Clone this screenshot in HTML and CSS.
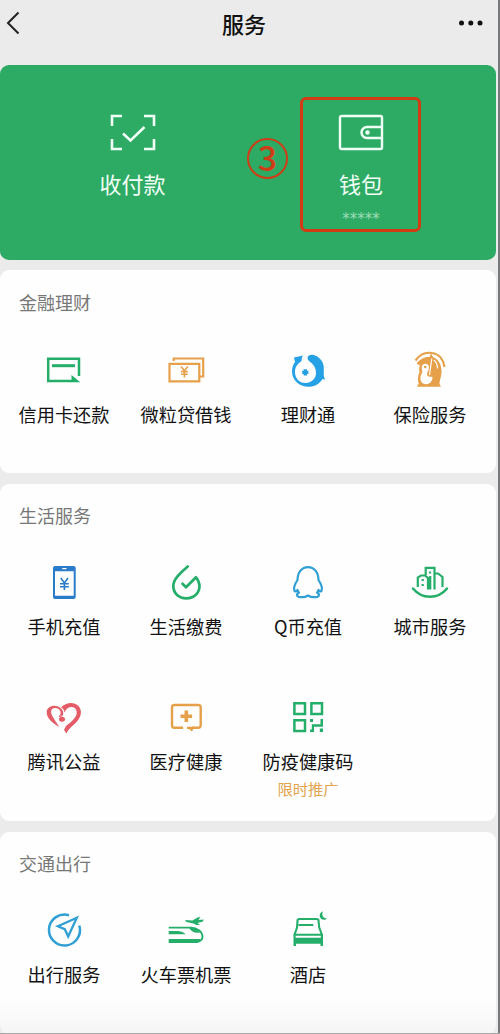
FILE: index.html
```html
<!DOCTYPE html>
<html lang="zh-CN">
<head>
<meta charset="utf-8">
<title>服务</title>
<link rel="stylesheet" href="styles.css">
</head>
<body>
<div class="screen">
  <header class="topbar">
    <svg class="back" width="14" height="24" viewBox="0 0 14 24"><path d="M12.500 1.500L2 12L12.500 22.500"/></svg>
    <h1 class="page-title">服务</h1>
    <svg class="more" width="24" height="6" viewBox="0 0 24 6"><circle cx="2.500" cy="3" r="2.500"/><circle cx="11.800" cy="3" r="2.500"/><circle cx="21" cy="3" r="2.500"/></svg>
  </header>

  <section class="hero">
    <div class="hero-item pay">
      <svg width="46" height="38" viewBox="0 0 46 38"><path d="M2 12V2H12M34 2H44V12M44 25V35H34M12 35H2V25" stroke-width="2.600"/><path d="M13 19.500L20.500 26.500L34.500 13" stroke-width="2.600"/></svg>
      <span class="hero-label">收付款</span>
    </div>
    <div class="hero-item wallet">
      <svg width="46" height="38" viewBox="0 0 46 38"><rect x="2" y="2" width="42" height="33" rx="1.500" stroke-width="2.400"/><path d="M43.500 13H29a5.500 5.500 0 0 0 0 11H43.500" stroke-width="2.400"/><circle cx="29.500" cy="18.500" r="2.200" class="dot"/></svg>
      <span class="hero-label">钱包</span>
      <span class="hero-sub">*****</span>
    </div>
    <div class="mark-box"></div>
    <div class="mark-num">3</div>
  </section>

  <section class="card finance">
    <h2 class="card-title">金融理财</h2>
    <div class="grid">
      <div class="item"><svg class="icon green" viewBox="0 0 44 44"><path d="M37 28V10.800H6.200V33H30" stroke-width="2.500"/><path d="M10 17.700H33" stroke-width="3"/><path class="fill" d="M29.500 27L38.300 34.300H29.500Z"/></svg><span>信用卡还款</span></div>
      <div class="item"><svg class="icon orange" viewBox="0 0 44 44"><path d="M5.500 15.800H35.300V33.300H5.500ZM9.700 13V10.500H39.200V28.500H36" stroke-width="2.200"/><path d="M17 18.500L20.400 22.800L23.800 18.500M20.400 22.800V29.500M17 23.600H23.800M17 26.300H23.800" stroke-width="1.600"/></svg><span>微粒贷借钱</span></div>
      <div class="item"><svg class="icon sky" viewBox="0 0 44 44"><path class="fill" d="M8 9.500L17 7.500C15.500 9.500 16 11.500 15.300 13.500C11.500 15.500 9 19 9 24C9 30.500 13.500 35 19.300 35C25.500 35 30 30.500 30 25C30 20.500 28 17.500 26 15.500C23.500 13.500 21.500 12 21.500 10C21.500 7.500 24 6.500 27 6.700C32.500 8 37 13 37.700 18C38 22 37.600 25.500 37.800 28L39 31.500L36.500 31C33.500 36 28.500 38.800 22.500 38.800C13 38.800 6 32 6 23.500C6 19.500 7 16.500 9 14Z"/><path d="M19.300 21.300V27.500M16.200 24.400H22.400" stroke-width="3.400"/></svg><span>理财通</span></div>
      <div class="item"><svg class="icon orange" viewBox="0 0 44 44"><path d="M7.500 12.500C12 6 18 4 24 5C31 6 35.500 11.500 36.500 19" stroke-width="2.200"/><path class="fill" d="M8.500 15.500C12 11 17 8.500 21.500 9L23 5.500L25 9C30 11 33.500 16 33.500 23C33.500 29 31.500 32 31.500 36L33 38.700H9.500V36.500H11C9.500 33 9.500 28 11.500 24C10.800 21.500 11 19.500 12 17.500Z"/><path class="cut" d="M14 18C15.500 14.500 20.500 15 21 19C21.200 22 19 24 19 26.500C19.500 29 22 28.500 24.500 29C24.500 33 22 36 18.500 36.200C13.500 36.500 11.700 32 12.700 28C13.200 26 14.500 25 14.300 23C13.700 21 13.500 19.500 14 18Z"/><path d="M23.800 10.500L21.500 27M25.800 12C29 14.500 29.500 17 29.500 20.500" class="cut-line"/><circle class="fill" cx="17.200" cy="19" r="1.300"/></svg><span>保险服务</span></div>
    </div>
  </section>

  <section class="card life">
    <h2 class="card-title">生活服务</h2>
    <div class="grid">
      <div class="item"><svg class="icon blue" viewBox="0 0 44 44"><path class="fill" fill-rule="evenodd" d="M13 6H31.500Q33.700 6 33.700 8V37Q33.700 39 31.500 39H13Q11 39 11 37V8Q11 6 13 6ZM13 11.300V35.700H31.700V11.300Z"/><path d="M20.200 8.600H24.500" stroke="#fff" stroke-width="1.200"/><path d="M18.800 18L22.400 23L26 18M22.400 23V30M18 23.800H26.800M18 26.800H26.800" stroke-width="1.600"/></svg><span>手机充值</span></div>
      <div class="item"><svg class="icon green" viewBox="0 0 44 44"><path d="M23.700 6.500C17.500 12 9.300 18.500 9.300 26C9.300 33.500 15 38.300 22.400 38.300C30 38.300 35.500 33 35.500 26C35.500 22.500 34 20 32 17.300L22 27.300L18.500 23.800" stroke-width="2.700" stroke-linecap="round" stroke-linejoin="round"/></svg><span>生活缴费</span></div>
      <div class="item"><svg class="icon sky2" viewBox="0 0 44 44"><path d="M11.500 30C10 32 8.800 31.700 8.300 30.500C7.500 27.500 9.500 23 11.500 20C11.500 12 16 7.200 22 7.200S32.500 12 32.500 20C34.500 23 36.500 27.500 35.700 30.500C35.200 31.700 34 32 32.500 30C32 31.500 31.500 32 31 32.500C35 35 32.500 37.300 28.500 37.200C25.500 37.300 23.500 36.500 22 35.500C20.500 36.500 18.500 37.300 15.500 37.200C11.500 37.300 9 35 13 32.500C12.500 32 12 31.500 11.500 30Z" stroke-width="2.200" stroke-linejoin="round"/></svg><span>Q币充值</span></div>
      <div class="item"><svg class="icon green" viewBox="0 0 44 44"><path d="M17.700 15V7.800H26.500V29.500M9.800 27V17.500L13 15.500H17L20 18V29.500M26.500 13.500H30L34.500 17V27M22.200 16V29.500" stroke-width="2.200"/><path d="M5 28.500C14 39.500 30 39.500 39 28.500" stroke-width="2.500" stroke-linecap="round"/><path d="M14.700 19V21M14.700 24V26M22 11.500V13.500" stroke-width="2.200"/></svg><span>城市服务</span></div>
      <div class="item"><svg class="icon red" viewBox="0 0 44 44"><path class="fill" d="M19 12.500C24 7 32 6.500 36.500 11C40.500 15.500 39.500 22 34 27.500C30 31.500 26.500 33.500 24.500 38.500L22 35L24 31C28 28 33 24 34.500 19.500C35.500 15 33 11.500 29 12C26 12.200 24 14 22.300 17.500C22 14.500 21 13.500 19 12.500Z"/><path class="fill" d="M17.500 32C10 28 4.500 23 4.700 17C5 10.500 14.500 8.500 19.500 14C22 16.500 21.500 20 20 21.500L18 20C20 16.500 17 13 13 13C9.500 13 8.500 16 9.500 19C10.500 22 14 27 17.500 32Z"/><ellipse class="fill" cx="20" cy="24.300" rx="3" ry="2.500"/><path d="M17 20.500L20.500 23.500" stroke-width="1.300"/></svg><span>腾讯公益</span></div>
      <div class="item"><svg class="icon orange" viewBox="0 0 44 44"><path d="M19 32.800H10.500Q8 32.800 8 30.300V12.500Q8 10 10.500 10H34.200Q36.700 10 36.700 12.500V30.300Q36.700 32.800 34.200 32.800H28" stroke-width="2.400"/><path class="fill" d="M23 31.700H31L27.800 36.500L25 33.900H23Z"/><path d="M22.300 15.500V27M16.500 21.300H28.100" stroke-width="3.600"/></svg><span>医疗健康</span></div>
      <div class="item"><svg class="icon green" viewBox="0 0 44 44"><path d="M8.400 8.200H19V18.900H8.400ZM25.400 8.200H36V18.900H25.400ZM8.400 25.200H19V35.900H8.400Z" stroke-width="2.500"/><path class="fill" d="M24 24H27V27H24ZM34.500 24H37V31.800H28V37H24V34.600H25.800V29.300H34.500ZM33.800 33.500H37V37H33.800Z"/></svg><span>防疫健康码</span><small>限时推广</small></div>
    </div>
  </section>

  <section class="card travel">
    <h2 class="card-title">交通出行</h2>
    <div class="grid">
      <div class="item"><svg class="icon sky2" viewBox="0 0 44 44"><path d="M27 7.200A15.500 15.500 0 1 0 37.300 17.500" stroke-width="2.500"/><path d="M15.800 18.200L34.800 9.800L26.200 28.500L22.800 21.200Z" stroke-width="2.300"/></svg><span>出行服务</span></div>
      <div class="item"><svg class="icon green" viewBox="0 0 44 44"><path class="fill" d="M21 12L28.500 12.500L33.500 9.500L36.500 9L34.500 12L39.500 11.500L39 13.500L33.500 15L36 17H32.500L29.500 15.500L22.500 14Z"/><path d="M4.700 19.600H27C33 19.600 38.300 24 38.500 28.500C38.500 31.500 36.500 33 34.500 33.500" stroke-width="1.900"/><path class="fill" d="M4.700 23H14Q18 23 22 26.300H4.700ZM4.700 31H36.800L34 34.900H4.700ZM25 20H31L36 24.500C31.500 25.500 27.500 24 25 20Z"/></svg><span>火车票机票</span></div>
      <div class="item"><svg class="icon green" viewBox="0 0 44 44"><path d="M8.500 27L11 19.500L11.500 12.500Q11.500 11 13.500 11H30.500Q32.500 11 32.500 12.500L33.200 19.500L36 27M12.500 17H27.300M8.500 26.700H36" stroke-width="2.100"/><path class="fill" d="M7.500 26H9.600V29.800H34.800V26H37V37.900H34.500V35.700H10V37.900H7.500ZM37 3.300C35.300 7 37 10.500 41 10.500C38.500 13 34 11.500 33.700 8C33.500 6 35 4 37 3.300Z"/></svg><span>酒店</span></div>
    </div>
  </section>
</div>
</body>
</html>
```
FILE: styles.css
```css
* { box-sizing: border-box; }
body {
  margin: 0;
  background: #ebebeb;
  color: #111;
  font-family: "Noto Sans CJK SC", sans-serif;
}
h1, h2 { margin: 0; font-weight: 400; }
svg { display: block; fill: none; }
.screen {
  width: 500px;
  height: 1034px;
  overflow: hidden;
  padding-right: 4px;
  background: linear-gradient(to right, #ebebeb 498px, #77797a 498px);
  border-bottom: 1px solid #aaa;
}
.topbar {
  height: 65px;
  padding: 11px 13px 0 6px;
  display: grid;
  grid-template-columns: 24px 1fr 24px;
  align-items: start;
}
.back { stroke: #222; stroke-width: 2; }
.page-title {
  font-size: 22px;
  font-weight: 500;
  line-height: 24px;
  text-align: center;
  padding-right: 1px;
}
.more { fill: #111; margin-top: 9px; }

.hero {
  position: relative;
  height: 195px;
  padding-left: 18px;
  display: grid;
  grid-template-columns: 229px 228px;
  border-radius: 9px;
  background: #2dab64;
  color: #f2fff7;
}
.hero-item {
  padding-top: 49px;
  display: flex;
  flex-direction: column;
  align-items: center;
  stroke: #effff5;
}
.hero-label { font-size: 22px; line-height: 30px; margin-top: 16px; }
.hero-sub {
  font-family: "DejaVu Sans", sans-serif;
  font-size: 15px;
  line-height: 20px;
  margin-top: 11px;
  color: #a0dbb8;
}
.dot { fill: #effff5; stroke: none; }
.mark-box {
  position: absolute;
  left: 300px;
  top: 32px;
  width: 121px;
  height: 135px;
  border: 3px solid #d13c14;
  border-radius: 6px;
}
.mark-num {
  position: absolute;
  left: 247px;
  top: 73px;
  width: 41px;
  height: 41px;
  border: 2px solid #cf3d17;
  border-radius: 50%;
  font-size: 34px;
  font-weight: 500;
  line-height: 34px;
  text-align: center;
  color: #cf3d17;
}

.card {
  margin-top: 11px;
  border-radius: 9px;
  background: #fefefe;
  padding-top: 20px;
}
.finance { height: 203px; margin-top: 10px; }
.life { height: 337px; }
.travel { height: 202px; background: linear-gradient(#fefefe 82%, #f5f5f5); }
.card-title {
  font-size: 18px;
  line-height: 24px;
  padding-left: 19px;
  color: #777;
}
.life .card-title, .travel .card-title { margin-top: -1px; }
.grid {
  display: grid;
  grid-template-columns: repeat(4, 122px);
  grid-auto-rows: 135px;
  padding: 34px 0 0 3px;
}
.life .grid { padding-top: 33px; }
.travel .grid { padding-top: 33px; }
.item {
  display: flex;
  flex-direction: column;
  align-items: center;
  font-size: 18.200px;
  line-height: 24px;
  white-space: nowrap;
}
.item span { margin-top: 10px; }
.item small { font-size: 15.300px; line-height: 20px; margin-top: 5px; color: #e2a34b; }
.icon { width: 44px; height: 44px; stroke: currentColor; }
.fill { fill: currentColor; stroke: none; }
.cut { fill: #fefefe; stroke: none; }
.cut-line { stroke: #fefefe; stroke-width: 1.200; }
.green { color: #25ae6a; }
.orange { color: #e6a04a; }
.sky { color: #26a1e5; }
.sky2 { color: #309fd4; }
.blue { color: #2a7bca; }
.red { color: #e35c67; }
```
